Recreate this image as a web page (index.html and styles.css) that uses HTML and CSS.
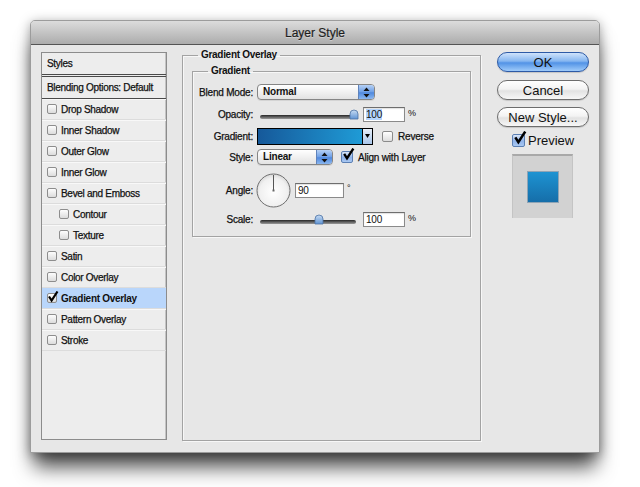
FILE: index.html
```html
<!DOCTYPE html>
<html lang="en">

<head>
    <meta charset="UTF-8">
    <meta name="viewport" content="width=device-width, initial-scale=1.0">
    <title>Layer Style</title>
    <link rel="stylesheet" href="styles.css">
</head>

<body>

    <div class="window">
        <div class="titlebar">Layer Style</div>

        <div class="window-body">

            <!-- Styles list -->
            <div class="style-list">
                <div class="list-head">Styles</div>
                <div class="list-blend">Blending Options: Default</div>
                <div class="list-item"><span class="check"></span>Drop Shadow</div>
                <div class="list-item"><span class="check"></span>Inner Shadow</div>
                <div class="list-item"><span class="check"></span>Outer Glow</div>
                <div class="list-item"><span class="check"></span>Inner Glow</div>
                <div class="list-item"><span class="check"></span>Bevel and Emboss</div>
                <div class="list-item sub"><span class="check"></span>Contour</div>
                <div class="list-item sub"><span class="check"></span>Texture</div>
                <div class="list-item"><span class="check"></span>Satin</div>
                <div class="list-item"><span class="check"></span>Color Overlay</div>
                <div class="list-item selected">
                    <span class="check">
                        <svg class="tick" width="12" height="12" viewBox="0 0 12 12"><path d="M2 5.5 L4.6 9.5 L10.5 0.5" fill="none" stroke="#000" stroke-width="2.2"/></svg>
                    </span>Gradient Overlay
                </div>
                <div class="list-item"><span class="check"></span>Pattern Overlay</div>
                <div class="list-item"><span class="check"></span>Stroke</div>
            </div>

            <!-- Settings -->
            <fieldset class="group outer">
                <legend>Gradient Overlay</legend>
                <fieldset class="group inner">
                    <legend>Gradient</legend>
                    <div class="form-grid">
                        <span class="field-label">Blend Mode:</span>
                        <div class="field">
                            <div class="select blend">
                                <span class="select-text">Normal</span>
                                <span class="select-arrows">
                                    <svg width="7" height="11" viewBox="0 0 7 11"><path d="M3.5 0.5 L6.5 4 L0.5 4 Z M0.5 7 L6.5 7 L3.5 10.5 Z" fill="#111"/></svg>
                                </span>
                            </div>
                        </div>

                        <span class="field-label">Opacity:</span>
                        <div class="field">
                            <svg class="slider" width="100" height="12" viewBox="0 0 100 12">
                                <defs>
                                    <linearGradient id="track" x1="0" y1="0" x2="0" y2="1">
                                        <stop offset="0" stop-color="#262626"/>
                                        <stop offset="1" stop-color="#9a9a9a"/>
                                    </linearGradient>
                                    <linearGradient id="knob" x1="0" y1="0" x2="0" y2="1">
                                        <stop offset="0" stop-color="#c9ddf4"/>
                                        <stop offset="1" stop-color="#5f93d3"/>
                                    </linearGradient>
                                </defs>
                                <rect x="2" y="7" width="96" height="4" rx="2" fill="url(#track)"/>
                                <path d="M93 11 L93 6 Q93 2 97 2 Q101 2 101 6 L101 11 Z" transform="translate(-1 0)" fill="url(#knob)" stroke="#4d72a3" stroke-width="0.8"/>
                            </svg>
                            <span class="num-input"><span class="sel-text">100</span></span>
                            <span class="unit">%</span>
                        </div>

                        <span class="field-label">Gradient:</span>
                        <div class="field">
                            <div class="gradient-bar">
                                <span class="gradient-fill"></span>
                                <span class="gradient-arrow">
                                    <svg width="5" height="4" viewBox="0 0 5 4"><path d="M0 0 L5 0 L2.5 4 Z" fill="#000"/></svg>
                                </span>
                            </div>
                            <span class="box reverse"></span>
                            <span class="opt-text">Reverse</span>
                        </div>

                        <span class="field-label">Style:</span>
                        <div class="field">
                            <div class="select style">
                                <span class="select-text">Linear</span>
                                <span class="select-arrows">
                                    <svg width="7" height="11" viewBox="0 0 7 11"><path d="M3.5 0.5 L6.5 4 L0.5 4 Z M0.5 7 L6.5 7 L3.5 10.5 Z" fill="#111"/></svg>
                                </span>
                            </div>
                            <span class="box blue">
                                <svg class="tick" width="13" height="13" viewBox="0 0 12 12"><path d="M2 5.5 L4.6 9.5 L10.5 0.5" fill="none" stroke="#000" stroke-width="2.2"/></svg>
                            </span>
                            <span class="opt-text">Align with Layer</span>
                        </div>

                        <span class="field-label">Angle:</span>
                        <div class="field">
                            <svg class="dial" width="35" height="35" viewBox="0 0 35 35">
                                <defs>
                                    <radialGradient id="dialFill" cx="0.5" cy="0.55" r="0.6">
                                        <stop offset="0" stop-color="#ffffff"/>
                                        <stop offset="0.7" stop-color="#f0f0f0"/>
                                        <stop offset="1" stop-color="#cfcfcf"/>
                                    </radialGradient>
                                </defs>
                                <circle cx="17.5" cy="17.5" r="16.5" fill="url(#dialFill)" stroke="#6f6f6f"/>
                                <line x1="17.5" y1="2" x2="17.5" y2="17.5" stroke="#555" stroke-width="1"/>
                                <rect x="16.5" y="16.5" width="2" height="2" fill="#666"/>
                            </svg>
                            <span class="num-input angle">90</span>
                            <span class="unit deg">°</span>
                        </div>

                        <span class="field-label">Scale:</span>
                        <div class="field">
                            <svg class="slider" width="100" height="12" viewBox="0 0 100 12">
                                <rect x="2" y="7" width="96" height="4" rx="2" fill="url(#track)"/>
                                <path d="M57 11 L57 6 Q57 2 61 2 Q65 2 65 6 L65 11 Z" fill="url(#knob)" stroke="#4d72a3" stroke-width="0.8"/>
                            </svg>
                            <span class="num-input">100</span>
                            <span class="unit">%</span>
                        </div>
                    </div>
                </fieldset>
            </fieldset>

            <!-- Buttons -->
            <div class="actions">
                <button class="btn default">OK</button>
                <button class="btn">Cancel</button>
                <button class="btn">New Style...</button>
                <div class="preview-row">
                    <span class="box blue big">
                        <svg class="tick" width="14" height="14" viewBox="0 0 12 12"><path d="M2 5.5 L4.6 9.5 L10.5 0.5" fill="none" stroke="#000" stroke-width="2.2"/></svg>
                    </span>
                    <span class="preview-text">Preview</span>
                </div>
                <div class="preview-box">
                    <span class="preview-swatch"></span>
                </div>
            </div>

        </div>
    </div>

</body>

</html>
```

FILE: styles.css
```css
html {
    background-color: #fff;
}

body {
    margin: 0;
    padding: 20px 0 40px 30px;
    font-family: "Liberation Sans", Arial, sans-serif;
    color: #111;
}

.window {
    width: 570px;
    height: 433px;
    box-sizing: border-box;
    background-color: #e7e7e7;
    border: 1px solid #9c9c9c;
    border-radius: 5px 5px 0 0;
    box-shadow: 0 18px 20px -4px rgba(0, 0, 0, 0.7), 0 2px 12px rgba(0, 0, 0, 0.35);
}

.titlebar {
    height: 23px;
    line-height: 24px;
    text-align: center;
    font-size: 12px;
    color: #1e1e1e;
    background: linear-gradient(#dcdcdc, #acacac);
    border-bottom: 1px solid #545454;
    border-radius: 4px 4px 0 0;
    text-shadow: 0 1px 0 rgba(255, 255, 255, 0.35);
    -webkit-text-stroke: 0.2px #1e1e1e;
}

.window-body {
    display: grid;
    grid-template-columns: 126px 299px 93px;
    column-gap: 15px;
    align-items: start;
    padding: 7px 9px 0 10px;
}

/* Styles list */
.style-list {
    height: 388px;
    box-sizing: border-box;
    background-color: #ededed;
    border: 1px solid #8c8c8c;
    box-shadow: inset -1px 0 0 #c4c4c4;
    font-size: 10px;
    letter-spacing: -0.3px;
    -webkit-text-stroke: 0.25px #111;
}

.list-head,
.list-blend {
    height: 21px;
    line-height: 21px;
    padding-left: 5px;
}

.list-head {
    border-bottom: 3px double #4a4a4a;
}

.list-blend {
    border-bottom: 1px solid #4a4a4a;
}

.list-item {
    display: flex;
    align-items: center;
    height: 20px;
    padding-left: 5px;
    border-bottom: 1px solid #dcdcdc;
    box-shadow: inset 0 1px 0 #f8f8f8;
}

.list-item.sub {
    padding-left: 17px;
}

.list-item.selected {
    background-color: #b9d6fb;
    box-shadow: none;
    font-weight: bold;
    -webkit-text-stroke: 0;
}

.check {
    position: relative;
    width: 10px;
    height: 10px;
    margin-right: 4px;
    box-sizing: border-box;
    border: 1px solid #8d8d8d;
    border-radius: 2px;
    background: linear-gradient(#fdfdfd, #dcdcdc);
}

.tick {
    position: absolute;
    left: -1px;
    top: -3px;
}

/* Fieldsets */
.group {
    margin: 0;
    min-inline-size: 0;
    border: 1px solid #a3a3a3;
    box-shadow: 1px 1px 0 #f7f7f7, inset 1px 1px 0 #f7f7f7;
}

.group legend {
    padding: 0 3px;
    font-size: 10px;
    line-height: 12px;
    font-weight: bold;
    letter-spacing: -0.3px;
}

.outer {
    height: 392px;
    box-sizing: border-box;
    margin-top: -3px;
    padding: 4px 9px 0 9px;
}

.outer > legend {
    margin-left: 6px;
}

.inner {
    height: 172px;
    box-sizing: border-box;
    padding: 0;
}

.inner > legend {
    margin-left: 15px;
}

.form-grid {
    display: grid;
    grid-template-columns: 60px 1fr;
    grid-template-rows: 20px 24px 20px 22px 44px 14px;
    column-gap: 4px;
    align-items: center;
    padding-top: 5px;
    font-size: 10px;
    letter-spacing: -0.2px;
}

.field-label {
    text-align: right;
    -webkit-text-stroke: 0.25px #111;
}

.field {
    display: flex;
    align-items: center;
}

/* Popup menus */
.select {
    display: flex;
    height: 16px;
    box-sizing: border-box;
    border: 1px solid #858585;
    border-radius: 4px;
    background: linear-gradient(#ffffff, #f1f1f1 50%, #e2e2e2);
    box-shadow: 0 1px 0 rgba(0, 0, 0, 0.08);
    overflow: hidden;
}

.select.blend {
    width: 118px;
}

.select.style {
    width: 76px;
    margin-right: 8px;
}

.select-text {
    flex: 1;
    padding-left: 5px;
    line-height: 14px;
    font-weight: bold;
}

.select-arrows {
    display: flex;
    align-items: center;
    justify-content: center;
    width: 15px;
    border-left: 1px solid #5f83bb;
    background: linear-gradient(#b6d1f5, #6d9fe6 50%, #4f88dd 55%, #8ab7f0);
}

/* Sliders and number boxes */
.slider {
    margin-left: 1px;
    margin-right: 5px;
    overflow: visible;
}

.num-input {
    width: 42px;
    height: 15px;
    box-sizing: border-box;
    padding-left: 2px;
    line-height: 13px;
    border: 1px solid #8a8a8a;
    border-top-color: #6e6e6e;
    background-color: #fff;
    box-shadow: inset 0 1px 1px rgba(0, 0, 0, 0.12);
}

.num-input.angle {
    width: 49px;
    margin-left: 4px;
}

.sel-text {
    background-color: #b5d5fd;
}

.unit {
    margin-left: 3px;
    align-self: flex-start;
    margin-top: 1px;
    font-size: 9px;
}

.unit.deg {
    margin-top: 10px;
}

.dial {
    margin-left: -1px;
}

/* Gradient swatch */
.gradient-bar {
    display: flex;
    width: 116px;
    height: 17px;
    box-sizing: border-box;
    border: 1px solid #000;
    margin-right: 9px;
}

.gradient-fill {
    flex: 1;
    background: linear-gradient(90deg, #16599a, #1f9bd6);
}

.gradient-arrow {
    display: flex;
    align-items: center;
    justify-content: center;
    width: 9px;
    border-left: 1px solid #000;
    background: linear-gradient(#e6eef8, #a9c6ea);
}

/* Checkboxes */
.box {
    position: relative;
    width: 11px;
    height: 11px;
    box-sizing: border-box;
    border: 1px solid #8b8b8b;
    border-radius: 2px;
    background: linear-gradient(#ffffff, #dedede);
    margin-right: 5px;
}

.box.blue {
    width: 12px;
    height: 12px;
    border-color: #5b7fb3;
    background: linear-gradient(#dbe7f8, #8fb3ea 55%, #a9c8f2);
}

.box.blue .tick {
    left: 0;
    top: -4px;
}

.box.big {
    width: 13px;
    height: 13px;
    margin-right: 3px;
}

.opt-text {
    font-size: 10px;
    -webkit-text-stroke: 0.25px #111;
}

/* Right column */
.actions {
    display: flex;
    flex-direction: column;
    margin-left: 1px;
}

.btn {
    height: 20px;
    margin: 0 0 7px 0;
    padding: 0;
    border: 1px solid #6d6d6d;
    border-radius: 10px;
    font-family: "Liberation Sans", Arial, sans-serif;
    font-size: 13px;
    color: #111;
    background: linear-gradient(#ffffff, #f3f3f3 45%, #e2e2e2 55%, #f7f7f7);
    box-shadow: 0 1px 1px rgba(0, 0, 0, 0.15);
}

.btn.default {
    margin-bottom: 8px;
    border-color: #2d5aa6;
    background: linear-gradient(#cfe3fb, #86b6f0 45%, #5293e6 55%, #9fcbfa);
}

.preview-row {
    display: flex;
    align-items: center;
    height: 16px;
    margin-top: -2px;
    padding-left: 15px;
}

.preview-text {
    font-size: 13px;
    color: #111;
}

.preview-box {
    display: flex;
    align-items: center;
    justify-content: center;
    width: 61px;
    height: 64px;
    box-sizing: border-box;
    margin: 6px 0 0 15px;
    background-color: #d2d2d2;
    border-top: 2px solid #a9a9a9;
    border-left: 1px solid #c4c4c4;
    border-right: 1px solid #c4c4c4;
}

.preview-swatch {
    width: 30px;
    height: 30px;
    background: linear-gradient(#1d93d2, #166ea9);
    box-shadow: 0 0 0 1px rgba(20, 80, 130, 0.35);
}
```
